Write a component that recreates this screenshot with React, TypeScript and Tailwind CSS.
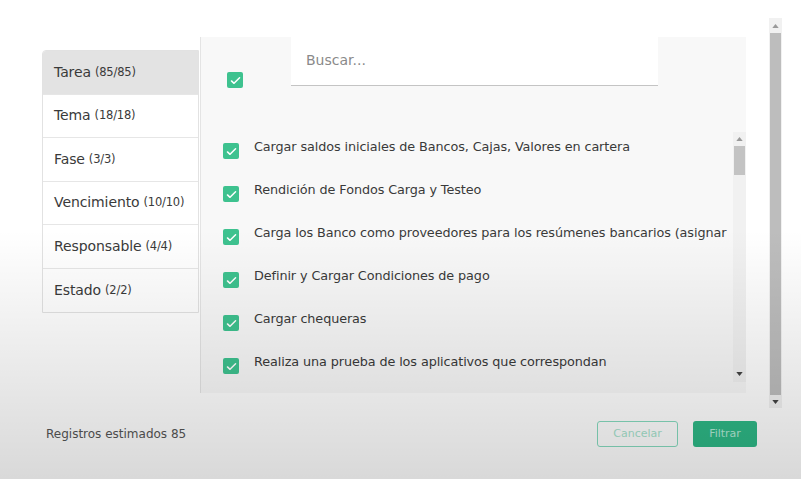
import React from 'react';

const items = [
  'Cargar saldos iniciales de Bancos, Cajas, Valores en cartera',
  'Rendición de Fondos Carga y Testeo',
  'Carga los Banco como proveedores para los resúmenes bancarios (asignar',
  'Definir y Cargar Condiciones de pago',
  'Cargar chequeras',
  'Realiza una prueba de los aplicativos que correspondan',
];

const groups = [
  { name: 'Tarea', count: '(85/85)' },
  { name: 'Tema', count: '(18/18)' },
  { name: 'Fase', count: '(3/3)' },
  { name: 'Vencimiento', count: '(10/10)' },
  { name: 'Responsable', count: '(4/4)' },
  { name: 'Estado', count: '(2/2)' },
];

function Check({ size = 16 }: { size?: number }) {
  return (
    <span
      className="flex items-center justify-center rounded-[2px] bg-[#3ec28f] shrink-0"
      style={{ width: size, height: size }}
    >
      <svg viewBox="0 0 16 16" width={size - 3} height={size - 3} fill="none">
        <path d="M3 8.5l3.2 3L13 4.5" stroke="#ffffff" strokeWidth="1.8" strokeLinecap="round" strokeLinejoin="round" />
      </svg>
    </span>
  );
}

function Arrow({ up }: { up?: boolean }) {
  return (
    <svg viewBox="0 0 8 5" width="7" height="4">
      <path d={up ? 'M0 5L4 0L8 5Z' : 'M0 0L4 5L8 0Z'} fill={up ? '#9a9a9a' : '#444'} />
    </svg>
  );
}

export default function App() {
  return (
    <div
      className="relative w-[801px] h-[479px] overflow-hidden bg-white text-[#3a3a3a]"
      style={{ fontFamily: '"DejaVu Sans", sans-serif' }}
    >
      <div className="flex h-[408px]">
        {/* Groups */}
        <div className="ml-[42px] mt-[50px] w-[157px] self-start border border-[#e2e2e2] rounded-tl-[4px] overflow-hidden bg-white">
          {groups.map((g, i) => (
            <div
              key={g.name}
              className={`h-[43.5px] flex items-center pl-[11px] border-b border-[#e6e6e6] last:border-b-0 ${i === 0 ? 'bg-[#e3e3e3]' : ''}`}
            >
              <span className="text-[14px] tracking-[-0.1px]">{g.name}</span>
              <span className="text-[11.5px] ml-[4px] tracking-[-0.2px]">{g.count}</span>
            </div>
          ))}
        </div>

        {/* Panel */}
        <div className="ml-[1px] mt-[37px] w-[546px] h-[356px] bg-[#f8f8f8] border-l border-[#e4e4e4] flex flex-col">
          <div className="flex items-start pl-[26px]">
            <div className="mt-[35px]">
              <Check size={16} />
            </div>
            <div className="ml-[48px] w-[367px] h-[49px] bg-white border-b-[1.5px] border-[#c4c4c4] flex items-center pl-[15px] pb-[2px]">
              <span className="text-[14px] text-[#8a8a8a]">Buscar...</span>
            </div>
          </div>

          <div className="mt-[44px] flex h-[250px]">
            <div className="flex-1 min-w-0 overflow-hidden pt-[5px] pl-[22px]">
              {items.map((t) => (
                <div key={t} className="h-[43px] flex items-start">
                  <div className="mt-[6px]">
                    <Check size={16} />
                  </div>
                  <span className="ml-[15px] text-[12.8px] leading-[20px] whitespace-nowrap tracking-[-0.1px]">{t}</span>
                </div>
              ))}
            </div>
            <div className="w-[13px] bg-[#f1f1f1] flex flex-col items-center">
              <div className="h-[14px] flex items-center"><Arrow up /></div>
              <div className="w-[11px] h-[29px] bg-[#c3c3c3]" />
              <div className="flex-1" />
              <div className="h-[17px] flex items-center"><Arrow /></div>
            </div>
          </div>
        </div>

        {/* Outer scrollbar */}
        <div className="ml-[23px] mt-[18px] w-[13px] h-[390px] bg-[#f1f1f1] flex flex-col items-center">
          <div className="h-[15px] flex items-center"><Arrow up /></div>
          <div className="w-[11px] h-[362px] bg-[#bdbdbd]" />
          <div className="flex-1 flex items-center"><Arrow /></div>
        </div>
      </div>

      {/* Footer */}
      <div className="flex items-center justify-between pl-[46px] pr-[44px] mt-[13px]">
        <span className="text-[12px] text-[#555]">Registros estimados 85</span>
        <div className="flex gap-[15px]">
          <div className="w-[81px] h-[26px] rounded-[3px] border border-[#86dbbf] flex items-center justify-center text-[11px] text-[#a6e3cd]">
            Cancelar
          </div>
          <div className="w-[64px] h-[26px] rounded-[3px] bg-[#2eb886] flex items-center justify-center text-[11px] text-[#b3ead6]">
            Filtrar
          </div>
        </div>
      </div>

      {/* bottom shading */}
      <div className="pointer-events-none absolute inset-x-0 top-[230px] bottom-0 bg-gradient-to-b from-transparent to-[#000]/[0.15]" />
    </div>
  );
}
